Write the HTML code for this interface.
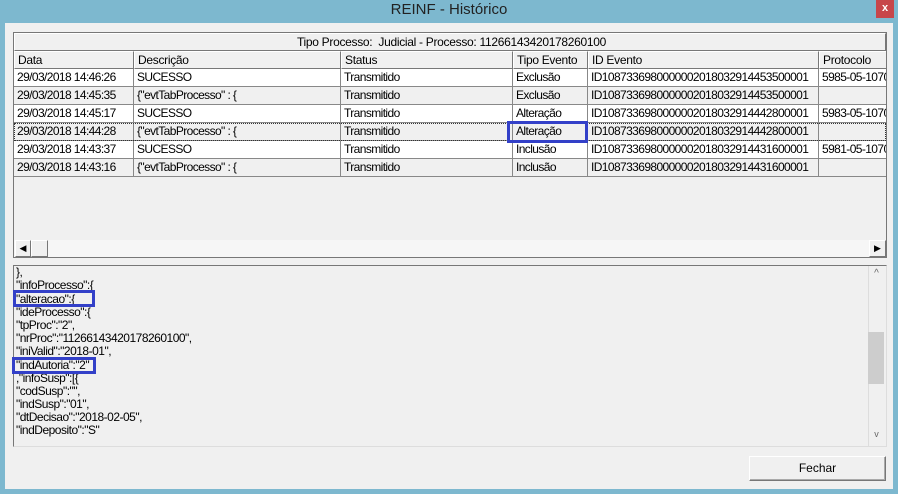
<!DOCTYPE html>
<html><head><meta charset="utf-8"><style>
*{margin:0;padding:0;box-sizing:border-box}
body{width:898px;height:494px;background:#7db8cf;position:relative;overflow:hidden;font-family:"Liberation Sans",sans-serif;font-size:12px;color:#000}
.a{position:absolute}
#title{left:0;top:0;width:898px;height:23px;text-align:center;line-height:20px;font-size:15px;color:#222}
#close{left:876px;top:0;width:18px;height:18px;background:#c7464a;color:#fff;font-size:11px;font-weight:bold;text-align:center;line-height:17px}
#client{left:5px;top:23px;width:888px;height:466px;background:#f0f0f0}
#grid{left:13px;top:32px;width:874px;height:226px;border:1px solid #777;background:#f0f0f0;overflow:hidden}
.cell{position:absolute;height:18px;line-height:17px;padding-left:3px;white-space:nowrap;overflow:hidden;border-right:1px solid #888;border-bottom:1px solid #888;letter-spacing:-0.6px}
.hd{background:#f0f0f0;border-top:1px solid #fff;border-left:1px solid #fff;border-right:1px solid #777;border-bottom:1px solid #777;letter-spacing:-0.3px}
.w{background:#fff}.g{background:#f0f0f0}
.memo{left:13px;top:265px;width:874px;height:182px;border-top:1px solid #777;border-left:1px solid #777;border-right:1px solid #ddd;border-bottom:1px solid #ddd}
.ln{position:absolute;left:2px;line-height:13px;white-space:nowrap;letter-spacing:-0.5px}
.box{position:absolute;border:3px solid #3340c8}
</style></head><body>
<div class="a" id="title">REINF - Histórico</div>
<div class="a" id="close">x</div>
<div class="a" id="client"></div>
<div class="a" id="grid">
 <div class="cell hd" style="left:0;top:0;width:872px;text-align:center">Tipo Processo:&nbsp; Judicial - Processo: 11266143420178260100</div>
 <div class="cell hd" style="left:0;top:18px;width:120px">Data</div>
 <div class="cell hd" style="left:120px;top:18px;width:207px">Descrição</div>
 <div class="cell hd" style="left:327px;top:18px;width:172px">Status</div>
 <div class="cell hd" style="left:499px;top:18px;width:75px">Tipo Evento</div>
 <div class="cell hd" style="left:574px;top:18px;width:231px">ID Evento</div>
 <div class="cell hd" style="left:805px;top:18px;width:70px">Protocolo</div>
 <div id="rows"></div>
 <div class="a" style="left:0;top:207px;width:872px;height:17px;background:#f6f6f6"></div>
 <div class="a" style="left:1px;top:207px;width:16px;height:17px;border:1px solid #777;border-top-color:#fff;border-left-color:#fff;background:#f0f0f0;font-size:9px;line-height:14px;text-align:center">◀</div>
 <div class="a" style="left:17px;top:207px;width:17px;height:17px;border:1px solid #777;border-top-color:#fff;border-left-color:#fff;background:#f0f0f0"></div>
 <div class="a" style="left:855px;top:207px;width:17px;height:17px;border:1px solid #777;border-top-color:#fff;border-left-color:#fff;background:#f0f0f0;font-size:9px;line-height:14px;text-align:center">▶</div>
</div>
<div class="box" style="left:507px;top:121px;width:81px;height:22px"></div>
<div class="a memo">
 <div class="ln" style="top:0px">},</div>
 <div class="ln" style="top:13px">"infoProcesso":{</div>
 <div class="ln" style="top:27px">"alteracao":{</div>
 <div class="ln" style="top:40px">"ideProcesso":{</div>
 <div class="ln" style="top:53px">"tpProc":"2",</div>
 <div class="ln" style="top:66px">"nrProc":"11266143420178260100",</div>
 <div class="ln" style="top:79px">"iniValid":"2018-01",</div>
 <div class="ln" style="top:93px">"indAutoria":"2"</div>
 <div class="ln" style="top:106px">,"infoSusp":[{</div>
 <div class="ln" style="top:119px">"codSusp":"",</div>
 <div class="ln" style="top:132px">"indSusp":"01",</div>
 <div class="ln" style="top:145px">"dtDecisao":"2018-02-05",</div>
 <div class="ln" style="top:158px">"indDeposito":"S"</div>
 <div class="a" style="left:854px;top:0;width:17px;height:180px;background:#f0f0f0;border-left:1px solid #ddd"></div>
 <div class="a" style="left:855px;top:2px;width:15px;color:#666;font-size:10px;text-align:center">^</div>
 <div class="a" style="left:854px;top:66px;width:16px;height:52px;background:#cdcdcd"></div>
 <div class="a" style="left:855px;top:163px;width:15px;color:#666;font-size:9px;text-align:center">v</div>
</div>
<div class="box" style="left:13px;top:290px;width:82px;height:17px"></div>
<div class="box" style="left:12px;top:357px;width:84px;height:17px"></div>
<div class="a" style="left:749px;top:456px;width:137px;height:25px;border:1px solid #777;border-top-color:#fff;border-left-color:#fff;box-shadow:inset -1px -1px 0 #aaa;background:#f0f0f0;text-align:center;line-height:22px">Fechar</div>
<script>
var d=[["29/03/2018 14:46:26","SUCESSO","Transmitido","Exclusão","ID1087336980000002018032914453500001","5985-05-1070"],
["29/03/2018 14:45:35","{\"evtTabProcesso\" : {","Transmitido","Exclusão","ID1087336980000002018032914453500001",""],
["29/03/2018 14:45:17","SUCESSO","Transmitido","Alteração","ID1087336980000002018032914442800001","5983-05-1070"],
["29/03/2018 14:44:28","{\"evtTabProcesso\" : {","Transmitido","Alteração","ID1087336980000002018032914442800001",""],
["29/03/2018 14:43:37","SUCESSO","Transmitido","Inclusão","ID1087336980000002018032914431600001","5981-05-1070"],
["29/03/2018 14:43:16","{\"evtTabProcesso\" : {","Transmitido","Inclusão","ID1087336980000002018032914431600001",""]];
var L=[0,120,327,499,574,805],W=[120,207,172,75,231,70],h="";
d.forEach(function(r,i){var c=i%2?"g":"w";r.forEach(function(t,j){h+='<div class="cell '+c+'" style="left:'+L[j]+'px;top:'+(36+i*18)+'px;width:'+W[j]+'px">'+t.replace(/</g,"&lt;")+'</div>';});});
h+='<div class="a" style="left:0;top:90px;width:872px;height:18px;border:1px dotted #333;pointer-events:none"></div>';
document.getElementById("rows").innerHTML=h;
</script>
</body></html>
